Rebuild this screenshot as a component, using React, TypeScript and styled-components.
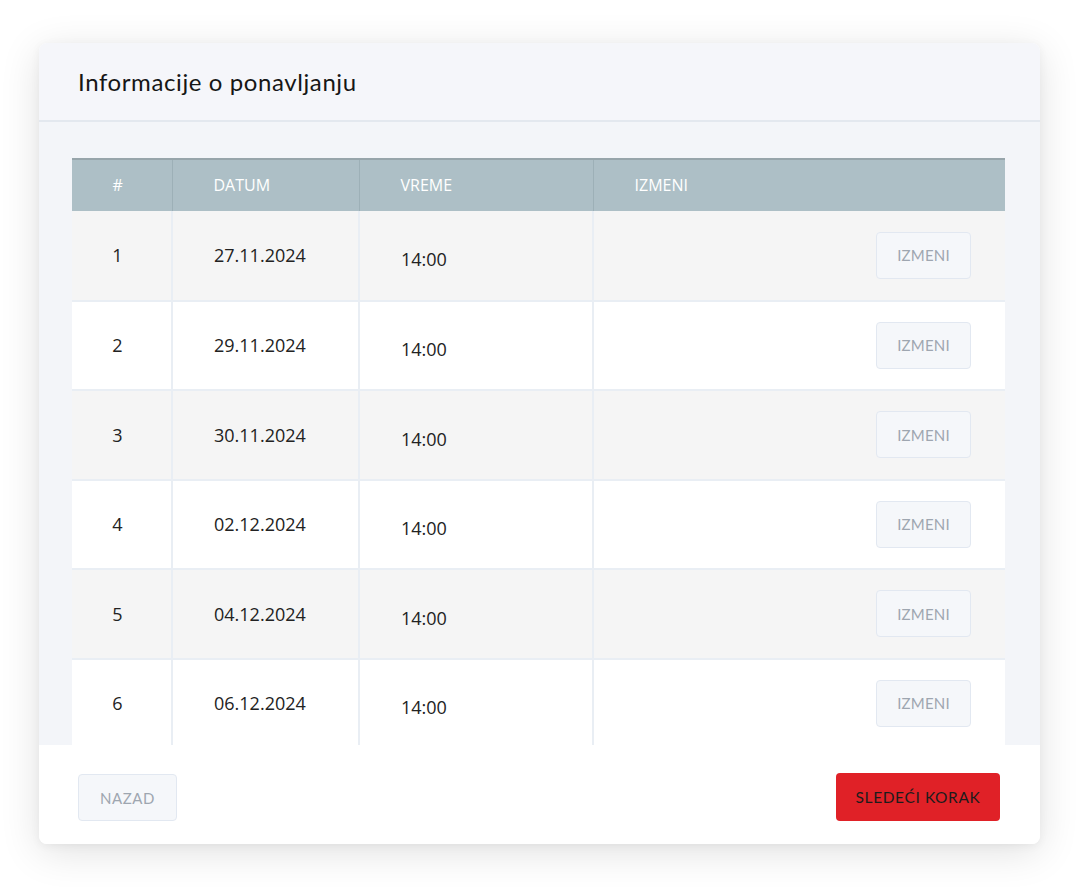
import React from "react";
import styled, { createGlobalStyle } from "styled-components";

type Occurrence = {
  id: number;
  date: string;
  time: string;
};

const occurrences: Occurrence[] = [
  { id: 1, date: "27.11.2024", time: "14:00" },
  { id: 2, date: "29.11.2024", time: "14:00" },
  { id: 3, date: "30.11.2024", time: "14:00" },
  { id: 4, date: "02.12.2024", time: "14:00" },
  { id: 5, date: "04.12.2024", time: "14:00" },
  { id: 6, date: "06.12.2024", time: "14:00" },
];

const App: React.FC = () => {
  return (
    <>
      <GlobalStyle />
      <Page>
        <Card>
          <Header>
            <Title>Informacije o ponavljanju</Title>
          </Header>
          <Body>
            <Table>
              <colgroup>
                <col style={{ width: 100 }} />
                <col style={{ width: 187 }} />
                <col style={{ width: 234 }} />
                <col />
              </colgroup>
              <thead>
                <tr>
                  <HeadCell $center>#</HeadCell>
                  <HeadCell>DATUM</HeadCell>
                  <HeadCell>VREME</HeadCell>
                  <HeadCell>IZMENI</HeadCell>
                </tr>
              </thead>
              <tbody>
                {occurrences.map((o, i) => (
                  <Row key={o.id} $striped={i % 2 === 0}>
                    <Cell $center>{o.id}</Cell>
                    <Cell>{o.date}</Cell>
                    <Cell $lower>{o.time}</Cell>
                    <ActionCell>
                      <EditButton type="button">IZMENI</EditButton>
                    </ActionCell>
                  </Row>
                ))}
              </tbody>
            </Table>
          </Body>
          <Footer>
            <BackButton type="button">NAZAD</BackButton>
            <NextButton type="button">SLEDEĆI KORAK</NextButton>
          </Footer>
        </Card>
      </Page>
    </>
  );
};

const GlobalStyle = createGlobalStyle`
  body {
    margin: 0;
    background: #ffffff;
    font-family: "Lato", "Open Sans", sans-serif;
  }
`;

const Page = styled.div`
  width: 1080px;
  height: 887px;
  padding: 43px 40px 0 39px;
  box-sizing: border-box;
`;

const Card = styled.div`
  width: 1001px;
  height: 801px;
  display: flex;
  flex-direction: column;
  border-radius: 8px;
  overflow: hidden;
  background: #ffffff;
  box-shadow: 0 8px 40px rgba(0, 0, 0, 0.12), 0 2px 10px rgba(0, 0, 0, 0.05);
`;

const Header = styled.div`
  height: 79px;
  box-sizing: border-box;
  display: flex;
  align-items: center;
  padding: 0 39px;
  background: #f5f6fa;
  border-bottom: 2px solid #e3e8ef;
`;

const Title = styled.h2`
  margin: 0;
  font-family: "Lato", sans-serif;
  font-size: 24px;
  font-weight: 400;
  letter-spacing: 0.6px;
  color: #161616;
`;

const Body = styled.div`
  height: 623px;
  box-sizing: border-box;
  padding: 36px 35px 0 33px;
  background: #f3f5f9;
  overflow: hidden;
`;

const Table = styled.table`
  width: 933px;
  border-collapse: collapse;
  table-layout: fixed;
  font-family: "Open Sans", sans-serif;
`;

const HeadCell = styled.th<{ $center?: boolean }>`
  height: 49px;
  padding: 0 ${({ $center }) => ($center ? "8px" : "0")} 2px
    ${({ $center }) => ($center ? "0" : "41px")};
  background: #adbfc6;
  border-top: 2px solid #97a5ab;
  border-left: 1px solid #9db0b7;
  color: #ffffff;
  font-size: 16px;
  font-weight: 400;
  text-align: ${({ $center }) => ($center ? "center" : "left")};
  vertical-align: middle;

  &:first-child {
    border-left: none;
  }
`;

const Row = styled.tr<{ $striped: boolean }>`
  height: 89.5px;
  background: ${({ $striped }) => ($striped ? "#f5f5f5" : "#ffffff")};
  border-bottom: 2px solid #e9eef4;
`;

const Cell = styled.td<{ $center?: boolean; $lower?: boolean }>`
  padding: ${({ $lower }) => ($lower ? "8px" : "0")}
    ${({ $center }) => ($center ? "8px" : "0")} 0
    ${({ $center }) => ($center ? "0" : "41px")};
  border-left: 2px solid #e9eef4;
  color: #222222;
  font-size: 18px;
  text-align: ${({ $center }) => ($center ? "center" : "left")};
  vertical-align: middle;

  &:first-child {
    border-left: none;
  }
`;

const ActionCell = styled.td`
  padding: 0 34px 0 0;
  border-left: 2px solid #e9eef4;
  text-align: right;
  vertical-align: middle;
`;

const GhostButton = styled.button`
  height: 47px;
  box-sizing: border-box;
  background: #f5f7fa;
  border: 1.5px solid #e2e8f1;
  border-radius: 4px;
  color: #9ea6b0;
  font-family: "Lato", sans-serif;
  font-size: 15px;
  cursor: pointer;
`;

const EditButton = styled(GhostButton)`
  width: 95px;
  padding: 0;
  letter-spacing: 0.2px;
`;

const Footer = styled.div`
  flex: 1;
  display: flex;
  justify-content: space-between;
  align-items: flex-start;
  padding: 28px 40px 0 39px;
  background: #ffffff;
`;

const BackButton = styled(GhostButton)`
  width: 99px;
  margin-top: 1px;
  padding: 0;
  letter-spacing: 0.6px;
`;

const NextButton = styled.button`
  width: 164px;
  height: 48px;
  padding: 0;
  background: #e02127;
  border: none;
  border-radius: 4px;
  color: #1c1c1c;
  font-family: "Lato", sans-serif;
  font-size: 15.5px;
  letter-spacing: 0.6px;
  cursor: pointer;
`;

export default App;
